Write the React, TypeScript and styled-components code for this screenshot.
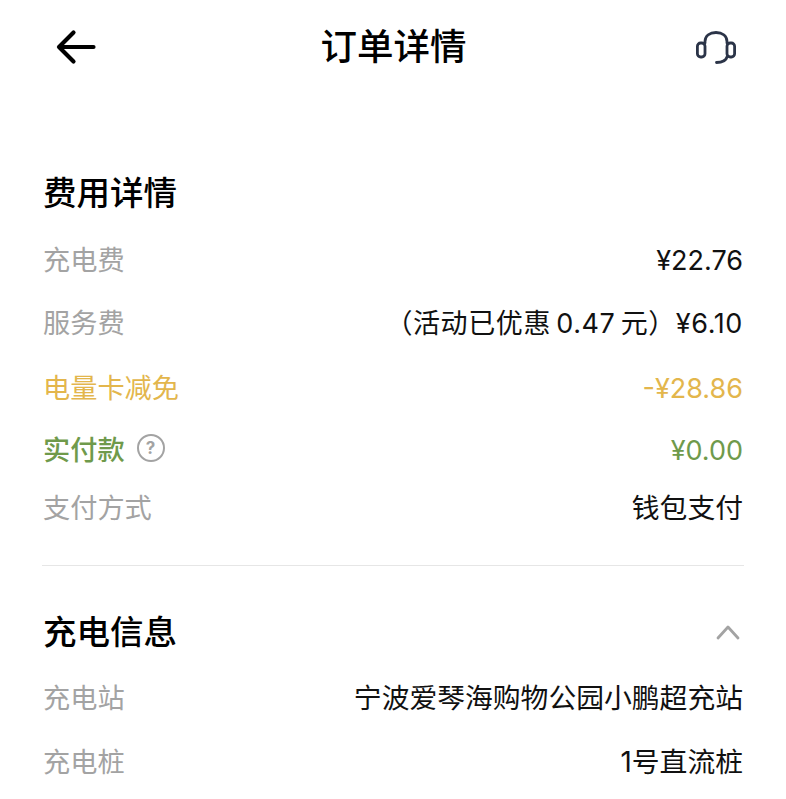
import React from 'react';
import styled, { createGlobalStyle } from 'styled-components';

const GlobalStyle = createGlobalStyle`
  html, body {
    margin: 0;
    padding: 0;
    background: #fff;
    overflow: hidden;
  }
  body {
    font-family: "Inter", "Noto Sans CJK SC", sans-serif;
  }
`;

type Tone = 'plain' | 'gold' | 'green';
type ValueKind = 'amount' | 'note' | 'text';

const toneColors: Record<Tone, string> = {
  plain: '#a3a3a3',
  gold: '#e3b64c',
  green: '#6f9a4b',
};

const valueColors: Record<Tone, string> = {
  plain: '#111',
  gold: '#e3b64c',
  green: '#6f9a4b',
};

function App() {
  return (
    <Page>
      <GlobalStyle />
      <NavBar>
        <svg width="44" height="36" viewBox="0 0 44 36" fill="none">
          <path d="M39.5 18H5M19.5 3.5 5 18l14.5 14.5" stroke="#000" strokeWidth="4.2" strokeLinecap="round" strokeLinejoin="round" />
        </svg>
        <NavTitle>订单详情</NavTitle>
        <svg width="42" height="36" viewBox="0 0 42 36" fill="none">
          <path d="M10 14v-1.500C10 6.500 15 3.500 21 3.500s11 3 11 9V14" stroke="#2b3448" strokeWidth="2.800" strokeLinecap="round" />
          <rect x="2.400" y="14" width="7.600" height="14" rx="3.200" stroke="#2b3448" strokeWidth="2.800" />
          <rect x="32" y="14" width="7.600" height="14" rx="3.200" stroke="#2b3448" strokeWidth="2.800" />
          <path d="M32 28c-1 3.500-5.500 5.500-10.500 5.500" stroke="#2b3448" strokeWidth="2.800" strokeLinecap="round" />
        </svg>
      </NavBar>

      <Section>
        <SectionTitle>费用详情</SectionTitle>
        <RowList>
          <Row height={62}><Label tone="plain">充电费</Label><Value tone="plain" kind="amount">¥22.76</Value></Row>
          <Row height={64}><Label tone="plain">服务费</Label><Value tone="plain" kind="note">（活动已优惠 0.47 元）¥6.10</Value></Row>
          <Row height={66}><Label tone="gold">电量卡减免</Label><Value tone="gold" kind="amount">-¥28.86</Value></Row>
          <Row height={58}>
            <Label tone="green" strong>实付款<Hint>?</Hint></Label>
            <Value tone="green" kind="amount">¥0.00</Value>
          </Row>
          <Row height={58}><Label tone="plain">支付方式</Label><Value tone="plain" kind="text">钱包支付</Value></Row>
        </RowList>
      </Section>

      <Divider />

      <InfoSection>
        <TitleRow>
          <SectionTitle>充电信息</SectionTitle>
          <svg width="24" height="16" viewBox="0 0 24 16" fill="none">
            <path d="M2 14 12 3l10 11" stroke="#a3a3a3" strokeWidth="2.800" strokeLinecap="round" strokeLinejoin="round" />
          </svg>
        </TitleRow>
        <RowList>
          <Row height={60}><Label tone="plain">充电站</Label><Value tone="plain" kind="text">宁波爱琴海购物公园小鹏超充站</Value></Row>
          <Row height={68}><Label tone="plain">充电桩</Label><Value tone="plain" kind="text">1号直流桩</Value></Row>
        </RowList>
      </InfoSection>
    </Page>
  );
}

const Page = styled.div`
  width: 786px;
  height: 799px;
  overflow: hidden;
  background: #fff;
`;

const NavBar = styled.div`
  height: 94px;
  padding: 0 49px 0 54px;
  display: flex;
  align-items: center;
  justify-content: space-between;
`;

const NavTitle = styled.div`
  font-size: 36.5px;
  font-weight: 500;
  line-height: 50px;
  margin-right: 6px;
  color: #000;
`;

const Section = styled.div`
  padding: 75px 43px 0 43px;
`;

const InfoSection = styled.div`
  padding: 42px 43px 0 43px;
`;

const TitleRow = styled.div`
  display: flex;
  align-items: center;
  justify-content: space-between;
  padding-right: 3px;
`;

const SectionTitle = styled.div`
  font-size: 33.5px;
  font-weight: 500;
  line-height: 48px;
  color: #000;
`;

const RowList = styled.div`
  margin-top: 10px;
`;

const Row = styled.div<{ height: number }>`
  height: ${({ height }) => height}px;
  display: flex;
  align-items: center;
  justify-content: space-between;
`;

const Label = styled.div<{ tone: Tone; strong?: boolean }>`
  display: flex;
  align-items: center;
  font-size: 27.2px;
  font-weight: ${({ strong }) => (strong ? 500 : 400)};
  color: ${({ tone }) => toneColors[tone]};
`;

const Value = styled.div<{ tone: Tone; kind: ValueKind }>`
  font-size: ${({ kind }) => (kind === 'text' ? 27.8 : 27)}px;
  margin-top: ${({ kind }) => (kind === 'amount' ? 4 : 0)}px;
  word-spacing: ${({ kind }) => (kind === 'note' ? -3 : 0)}px;
  letter-spacing: ${({ kind }) => (kind === 'note' ? 0.6 : 0)}px;
  color: ${({ tone }) => valueColors[tone]};
`;

const Hint = styled.span`
  box-sizing: border-box;
  width: 28px;
  height: 28px;
  margin-left: 12px;
  border: 2.5px solid #a3a3a3;
  border-radius: 50%;
  display: flex;
  align-items: center;
  justify-content: center;
  font-size: 17px;
  font-weight: 700;
  color: #a3a3a3;
`;

const Divider = styled.div`
  height: 1px;
  margin: 30px 42px 0;
  background: #e6e6e6;
`;

export default App;
